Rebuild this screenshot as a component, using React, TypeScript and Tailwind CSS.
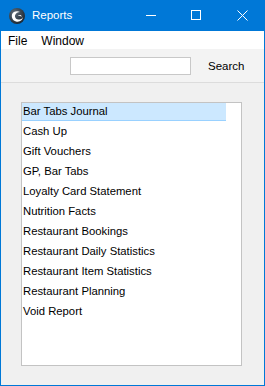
import React from "react";

const items = [
  "Bar Tabs Journal",
  "Cash Up",
  "Gift Vouchers",
  "GP, Bar Tabs",
  "Loyalty Card Statement",
  "Nutrition Facts",
  "Restaurant Bookings",
  "Restaurant Daily Statistics",
  "Restaurant Item Statistics",
  "Restaurant Planning",
  "Void Report",
];

export default function App() {
  return (
    <div
      className="w-[265px] h-[386px] flex flex-col bg-[#f0f0f0] border-x border-b border-[#0078d7] overflow-hidden text-[11.3px] text-black"
      style={{ fontFamily: '"Liberation Sans", Arial, sans-serif' }}
    >
      {/* Title bar */}
      <div className="h-[31px] shrink-0 bg-[#0078d7] flex items-center text-white relative">
        <svg width="16" height="16" viewBox="0 0 16 16" className="ml-[8px]">
          <defs>
            <radialGradient id="g" cx="0.35" cy="0.3" r="0.8">
              <stop offset="0" stopColor="#5d6b78" />
              <stop offset="1" stopColor="#17212b" />
            </radialGradient>
          </defs>
          <circle cx="8" cy="8" r="8" fill="url(#g)" />
          <path d="M3 6.5 C4 3.5 8 2.5 11 4 C9 4 6.5 5 6 7.5 C5.6 10 8 12 11 11.5 C13 11 14 9.5 14 8.5 C14 12 10.5 14.5 7 13.5 C3.8 12.6 2.3 9.5 3 6.5 Z" fill="#fff" />
          <path d="M9 7.5 C10.5 6.5 12.5 7 13 8.5 C11.5 8 10 8.3 9 7.5 Z" fill="#fff" />
        </svg>
        <span className="ml-[7px] text-[11.5px]">Reports</span>
        <div className="absolute left-[145px] top-[15px] w-[10px] h-[1px] bg-white" />
        <div className="absolute left-[190px] top-[10px] w-[10px] h-[10px] border border-white" />
        <svg width="11" height="11" viewBox="0 0 11 11" className="absolute left-[236px] top-[10px]">
          <path d="M0.5 0.5 L10.5 10.5 M10.5 0.5 L0.5 10.5" stroke="#fff" strokeWidth="1" />
        </svg>
      </div>

      {/* Menu bar */}
      <div className="h-[18px] shrink-0 bg-white flex items-center text-[12px] pt-[1px]">
        <span className="ml-[7px]">File</span>
        <span className="ml-[14px]">Window</span>
      </div>

      {/* Toolbar */}
      <div className="h-[34px] shrink-0 bg-[#f3f3f3] border-b border-[#dcdcdc] flex items-center">
        <div className="ml-[69px] w-[121px] h-[18px] bg-white border border-[#c8c8c8]" />
        <span className="ml-[17px] text-[11.5px] pt-[2px]">Search</span>
      </div>

      {/* Body */}
      <div className="flex-1 pt-[19px] pl-[20px] pr-[22px]">
        <div className="w-[221px] h-[264px] bg-white border border-[#c3c3c3] flex flex-col">
          {items.map((t, i) => (
            <div key={t} className="h-[20px] shrink-0 flex">
              <div
                className={
                  i === 0
                    ? "w-[204px] h-[18px] bg-[#cce8ff] border-b border-[#99d1ff] flex items-center pl-[1px] pb-[1px]"
                    : "h-[18px] flex items-center pl-[1px] pb-[1px]"
                }
              >
                {t}
              </div>
            </div>
          ))}
        </div>
      </div>
    </div>
  );
}
